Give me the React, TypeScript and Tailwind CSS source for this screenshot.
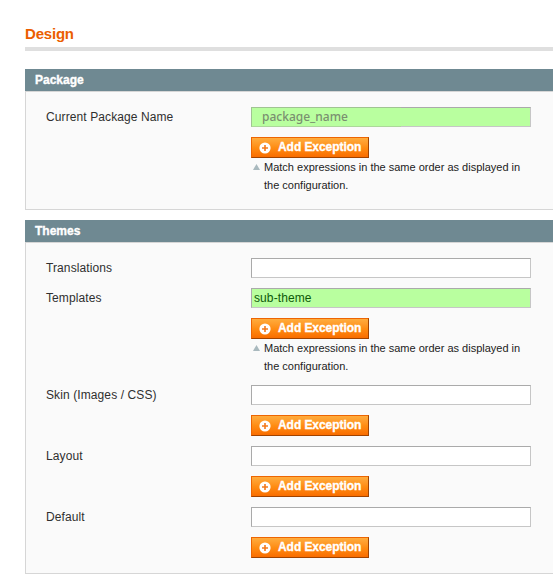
import type { ReactNode } from "react";

function AddButton() {
  return (
    <button className="mt-[10px] flex h-[21px] w-[118px] items-start border border-t-[#ed6502] border-l-[#ed6502] border-r-[#a04300] border-b-[#a04300] bg-linear-to-b from-[#ffac3c] via-[#ff8d12] to-[#f96d00] pl-[7px] text-white">
      <svg className="mt-[4px] shrink-0" width="12" height="12" viewBox="0 0 12 12">
        <circle cx="6" cy="6" r="5.6" fill="#fff" />
        <path d="M6 3v6M3 6h6" stroke="#f3791c" strokeWidth="1.6" />
      </svg>
      <span className="ml-[7px] text-[12px] leading-[18px] font-bold whitespace-nowrap tracking-[-0.06px] [-webkit-text-stroke:0.35px_white]">
        Add Exception
      </span>
    </button>
  );
}

function Hint() {
  return (
    <p className="flex h-9 text-[11px] leading-[18px] whitespace-nowrap text-[#222]">
      <svg className="mt-[6px] ml-[2px] shrink-0" width="7" height="6" viewBox="0 0 7 6">
        <path d="M3.5 0L7 6H0z" fill="#a9b9be" />
      </svg>
      <span className="ml-1">
        Match expressions in the same order as displayed in
        <br />
        the configuration.
      </span>
    </p>
  );
}

type FieldProps = { label: string; value?: ReactNode; green?: boolean; button?: boolean; hint?: boolean };

function Field({ label, value, green, button, hint }: FieldProps) {
  return (
    <div className="flex">
      <div className="w-[205px] shrink-0 text-[12px] leading-5 tracking-[0.1px] text-[#2f2f2f]">{label}</div>
      <div className="w-[280px] shrink-0">
        <div
          className={`relative flex h-5 items-center border border-t-[#aaa] border-l-[#aaa] border-r-[#c6c6c6] border-b-[#c6c6c6] ${green ? "bg-[#b9ff9f]" : "bg-white"}`}
        >
          {value}
        </div>
        {button && <AddButton />}
        {hint && <Hint />}
      </div>
    </div>
  );
}

function Section({ title, children }: { title: string; children: ReactNode }) {
  return (
    <section>
      <h3 className="h-[22px] bg-[#6f8992] pl-[10px] text-[12px] leading-[22px] font-bold text-white [-webkit-text-stroke:0.35px_white]">
        {title}
      </h3>
      <div className="flex flex-col gap-[10px] border border-r-0 border-[#d6d6d6] bg-[#fafafa] py-[15px] pl-5">
        {children}
      </div>
    </section>
  );
}

export default function App() {
  return (
    <main className="h-[584px] w-[553px] overflow-hidden bg-white pt-[22px] pl-[25px] font-['Liberation_Sans',Arial,sans-serif]">
      <h1 className="h-[25px] text-[15px] leading-[24px] font-bold tracking-[-0.2px] text-[#eb5e00]">Design</h1>
      <div className="mb-[18px] h-1 bg-[#dfdfdf]" />
      <div className="flex flex-col gap-[10px]">
        <Section title="Package">
          <Field
            label="Current Package Name"
            green
            button
            hint
            value={
              <span className="absolute -top-px -left-px h-5 w-[150px] border border-t-[#a0c492] border-r-0 border-b-[#add79b] border-l-[#a0c492] bg-[#b9ff9f] pl-[10px] font-['Noto_Sans',sans-serif] text-[12px] leading-[18px] font-medium text-[#7a8f70]">
                package_name
              </span>
            }
          />
        </Section>
        <Section title="Themes">
          <Field label="Translations" />
          <Field
            label="Templates"
            green
            button
            hint
            value={<span className="pl-[2px] text-[12px] leading-[18px] tracking-[0.1px] text-[#0d5a08]">sub-theme</span>}
          />
          <Field label="Skin (Images / CSS)" button />
          <Field label="Layout" button />
          <Field label="Default" button />
        </Section>
      </div>
    </main>
  );
}
